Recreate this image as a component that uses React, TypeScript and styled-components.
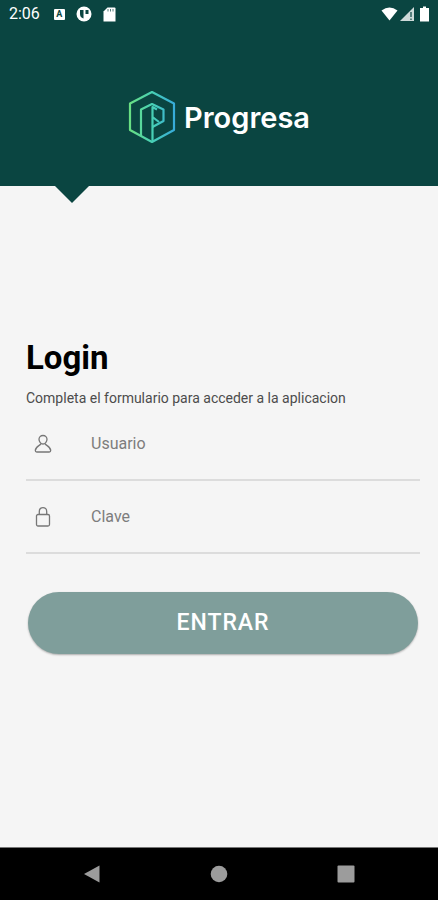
import React, { useState } from "react";
import styled, { createGlobalStyle } from "styled-components";

const GlobalStyle = createGlobalStyle`
  *, *::before, *::after { box-sizing: border-box; }
  body { margin: 0; background: #f5f5f5; font-family: Roboto, "Liberation Sans", sans-serif; }
`;

const Screen = styled.div`
  min-height: 100vh;
  display: flex;
  flex-direction: column;
  background: #f5f5f5;
`;

const Header = styled.header`
  position: relative;
  padding-bottom: 42px;
  display: flex;
  flex-direction: column;
  background: #0a4541;
`;

const HeaderPointer = styled.span`
  position: absolute;
  top: 100%;
  left: 55px;
  border-left: 17px solid transparent;
  border-right: 17px solid transparent;
  border-top: 17px solid #0a4541;
`;

const StatusBar = styled.div`
  height: 28px;
  padding: 0 6px 0 9px;
  display: flex;
  align-items: center;
  justify-content: space-between;
  color: #fff;
`;

const StatusGroup = styled.div<{ $gap: number }>`
  display: flex;
  align-items: center;
  gap: ${(p) => p.$gap}px;
`;

const Clock = styled.time`
  font-size: 16px;
  line-height: 20px;
  margin-right: 3px;
`;

const Brand = styled.div`
  padding-top: 62px;
  display: flex;
  justify-content: center;
  align-items: center;
  gap: 8px;
`;

const BrandName = styled.span`
  padding-top: 2px;
  font-family: Inter, "Open Sans", sans-serif;
  font-size: 29px;
  line-height: 36px;
  font-weight: 600;
  color: #fff;
`;

const Main = styled.main`
  flex: 1;
  padding: 152px 18px 32px 26px;
`;

const Title = styled.h1`
  margin: 0;
  font-size: 33px;
  line-height: 40px;
  font-weight: 700;
  color: #000;
`;

const Subtitle = styled.p`
  margin: 10px 0 0;
  font-size: 14px;
  line-height: 20px;
  color: #4c4c4c;
`;

const Field = styled.label`
  height: 73px;
  display: flex;
  align-items: center;
  gap: 38px;
  padding-left: 7px;
  border-bottom: 2px solid #dcdcdc;
  color: #777;
`;

const TextInput = styled.input`
  flex: 1;
  min-width: 0;
  padding: 0;
  border: 0;
  outline: 0;
  background: transparent;
  font-family: inherit;
  font-size: 16px;
  line-height: 24px;
  color: #333;
  &::placeholder { color: #7d7d7d; opacity: 1; }
`;

const SubmitButton = styled.button`
  display: block;
  width: calc(100% - 4px);
  height: 62px;
  margin: 38px 2px 0;
  border: 0;
  border-radius: 31px;
  background: #7f9e9b;
  box-shadow: 0 1px 2px rgba(0, 0, 0, 0.3);
  color: #fff;
  font-family: inherit;
  font-size: 23px;
  line-height: 28px;
  font-weight: 500;
  letter-spacing: 1px;
`;

const NavBar = styled.nav`
  height: 53px;
  padding: 0 29px;
  display: flex;
  align-items: center;
  justify-content: space-between;
  background: #000;
  border-top: 1px solid #777;
`;

const NavButton = styled.button`
  width: 126px;
  height: 48px;
  padding: 0;
  border: 0;
  display: flex;
  align-items: center;
  justify-content: center;
  background: transparent;
  color: #9c9c9c;
`;

const LetterBadge = styled.span`
  width: 11px;
  height: 11px;
  border-radius: 1px;
  display: flex;
  align-items: center;
  justify-content: center;
  background: #fff;
  color: #0a4541;
  font-size: 9px;
  line-height: 11px;
  font-weight: 700;
`;

function Logo() {
  return (
    <svg width="48" height="54" viewBox="0 0 48 54" fill="none" aria-hidden="true">
      <defs>
        <linearGradient id="brand" x1="0" y1="0" x2="48" y2="0" gradientUnits="userSpaceOnUse">
          <stop offset="0" stopColor="#6be07f" />
          <stop offset="0.5" stopColor="#48d0b5" />
          <stop offset="1" stopColor="#36a9dc" />
        </linearGradient>
      </defs>
      <g stroke="url(#brand)" strokeWidth="2.2" strokeLinejoin="round">
        <path d="M24 2 46 13.500V40L24 52 2 40V13.500Z" />
        <path d="M13 46V19.500L24 14 35.500 19.500V31L24.500 37" />
        <path d="M24.500 52V17L29 19.500M24.500 27 31 32" />
      </g>
    </svg>
  );
}

function StatusIcons() {
  return (
    <StatusGroup $gap={2}>
      <svg width="17" height="14" viewBox="0 0 17 14" aria-label="Wi-Fi">
        <path d="M0.500 3.500Q8.500-2.500 16.500 3.500L8.500 13.500Z" fill="currentColor" />
      </svg>
      <svg width="14" height="14" viewBox="0 0 14 14" aria-label="Señal">
        <path d="M0 14 14 0V14Z" fill="currentColor" opacity="0.8" />
        <path d="M11 5V10M11 11.500V13" stroke="#0a4541" strokeWidth="1.200" />
      </svg>
      <svg width="16" height="16" viewBox="0 0 16 16" aria-label="Batería">
        <path d="M4 2H7V0.500H10V2H13V15.500H4Z" fill="currentColor" />
      </svg>
    </StatusGroup>
  );
}

function UserIcon() {
  return (
    <svg width="20" height="22" viewBox="0 0 20 22" fill="none" stroke="currentColor" strokeWidth="1.300" aria-hidden="true">
      <path d="M10 2.500C7.500 2.500 6 4.200 6 6.200 6 8.800 8 11 10 11S14 8.800 14 6.200C14 4.200 12.500 2.500 10 2.500Z" />
      <path d="M8 10.500C7.500 12.500 2.300 13.500 2.300 17.500Q2.300 19 3.800 19H16.200Q17.700 19 17.700 17.500C17.700 13.500 12.500 12.500 12 10.500" />
    </svg>
  );
}

function LockIcon() {
  return (
    <svg width="20" height="22" viewBox="0 0 20 22" fill="none" stroke="currentColor" strokeWidth="1.300" aria-hidden="true">
      <rect x="3.500" y="8.500" width="13" height="11.500" rx="1.500" />
      <path d="M6.300 8.500V5.500C6.300 0.200 13.700 0.200 13.700 5.500V8.500" />
    </svg>
  );
}

export default function App() {
  const [user, setUser] = useState("");
  const [password, setPassword] = useState("");

  return (
    <Screen>
      <GlobalStyle />
      <Header>
        <StatusBar>
          <StatusGroup $gap={11}>
            <Clock>2:06</Clock>
            <LetterBadge>A</LetterBadge>
            <svg width="16" height="16" viewBox="0 0 16 16" aria-hidden="true">
              <circle cx="8" cy="8" r="7.500" fill="#fff" />
              <path d="M4 4H7.500V12.500Q4 11.500 4 8ZM9.500 4H12.500V8H9.500Z" fill="#0a4541" />
            </svg>
            <svg width="13" height="15" viewBox="0 0 13 15" aria-hidden="true">
              <path d="M4.500 0.500H11.500Q12.500 0.500 12.500 1.500V14.500H0.500V4.500Z" fill="#fff" />
              <path d="M5 2V4.500M7.500 2V4.500M10 2V4.500" stroke="#0a4541" strokeWidth="0.700" />
            </svg>
          </StatusGroup>
          <StatusIcons />
        </StatusBar>
        <Brand>
          <Logo />
          <BrandName>Progresa</BrandName>
        </Brand>
        <HeaderPointer />
      </Header>
      <Main>
        <Title>Login</Title>
        <Subtitle>Completa el formulario para acceder a la aplicacion</Subtitle>
        <form onSubmit={(e) => e.preventDefault()}>
          <Field>
            <UserIcon />
            <TextInput
              type="text"
              placeholder="Usuario"
              aria-label="Usuario"
              value={user}
              onChange={(e) => setUser(e.target.value)}
            />
          </Field>
          <Field>
            <LockIcon />
            <TextInput
              type="password"
              placeholder="Clave"
              aria-label="Clave"
              value={password}
              onChange={(e) => setPassword(e.target.value)}
            />
          </Field>
          <SubmitButton type="submit">ENTRAR</SubmitButton>
        </form>
      </Main>
      <NavBar>
        <NavButton type="button" aria-label="Atrás">
          <svg width="18" height="18" viewBox="0 0 18 18">
            <path d="M1 9 16.500 0.500V17.500Z" fill="currentColor" />
          </svg>
        </NavButton>
        <NavButton type="button" aria-label="Inicio">
          <svg width="18" height="18" viewBox="0 0 18 18">
            <circle cx="9" cy="9" r="8.300" fill="currentColor" />
          </svg>
        </NavButton>
        <NavButton type="button" aria-label="Recientes">
          <svg width="18" height="18" viewBox="0 0 18 18">
            <rect x="0.500" y="0.500" width="17" height="17" rx="1" fill="currentColor" />
          </svg>
        </NavButton>
      </NavBar>
    </Screen>
  );
}
